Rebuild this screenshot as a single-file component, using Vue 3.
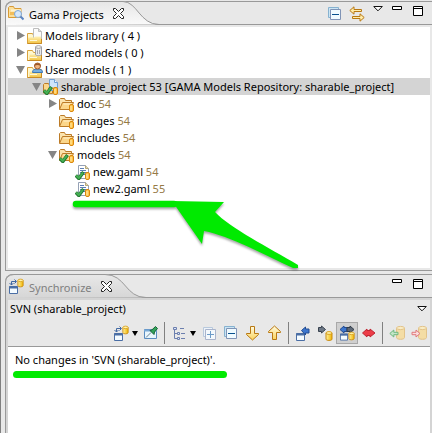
<script setup>
import { ref, computed } from 'vue'

const nodes = ref([
  { id: 1, level: 0, icon: 'library', label: 'Models library ( 4 )', open: false, branch: true },
  { id: 2, level: 0, icon: 'shared', label: 'Shared models ( 0 )', open: false, branch: true },
  { id: 3, level: 0, icon: 'user', label: 'User models ( 1 )', open: true, branch: true },
  { id: 4, level: 1, icon: 'project', label: 'sharable_project 53 [GAMA Models Repository: sharable_project]', open: true, branch: true },
  { id: 5, level: 2, icon: 'folder', label: 'doc', rev: 54, open: false, branch: true },
  { id: 6, level: 2, icon: 'folder', label: 'images', rev: 54 },
  { id: 7, level: 2, icon: 'folder', label: 'includes', rev: 54 },
  { id: 8, level: 2, icon: 'folder-ok', label: 'models', rev: 54, open: true, branch: true },
  { id: 9, level: 3, icon: 'file', label: 'new.gaml', rev: 54 },
  { id: 10, level: 3, icon: 'file', label: 'new2.gaml', rev: 55 },
])
const selected = ref(4)

const visible = computed(() => {
  let hiddenBelow = Infinity
  return nodes.value.filter((n) => {
    if (n.level > hiddenBelow) return false
    hiddenBelow = n.branch && !n.open ? n.level : Infinity
    return true
  })
})

const toolGroups = [
  [
    { icon: 'sync', label: 'Synchronize', menu: true },
    { icon: 'pin', label: 'Pin view' },
  ],
  [
    { icon: 'layout', label: 'Layout', menu: true },
    { icon: 'expand', label: 'Expand all' },
    { icon: 'collapse', label: 'Collapse all' },
    { icon: 'down', label: 'Next difference' },
    { icon: 'up', label: 'Previous difference' },
  ],
  [
    { icon: 'incoming', label: 'Incoming mode' },
    { icon: 'outgoing', label: 'Outgoing mode' },
    { icon: 'both', label: 'Incoming and outgoing mode', active: true },
    { icon: 'conflict', label: 'Conflicts mode' },
  ],
  [
    { icon: 'update', label: 'Update all', disabled: true },
    { icon: 'commit', label: 'Commit all', disabled: true },
  ],
]
</script>

<template>
  <svg class="sprite" aria-hidden="true">
    <defs>
      <linearGradient id="g-active" x1="0" y1="0" x2="0" y2="1">
        <stop offset="0" stop-color="#e6e6e6" /><stop offset="1" stop-color="#fafafa" />
      </linearGradient>
      <linearGradient id="g-idle" x1="0" y1="0" x2="0" y2="1">
        <stop offset="0" stop-color="#e8e8e8" /><stop offset="1" stop-color="#d6d6d6" />
      </linearGradient>
      <linearGradient id="g-fold" x1="0" y1="0" x2="0" y2="1">
        <stop offset="0" stop-color="#fff2b8" /><stop offset="1" stop-color="#f3c64a" />
      </linearGradient>
      <linearGradient id="g-cyl" x1="0" y1="0" x2="1" y2="0">
        <stop offset="0" stop-color="#fff3a0" /><stop offset="1" stop-color="#f0b400" />
      </linearGradient>
      <linearGradient id="g-arrow" x1="0" y1="0" x2="0" y2="1">
        <stop offset="0" stop-color="#fffbe0" /><stop offset="1" stop-color="#fbd35c" />
      </linearGradient>
    </defs>

    <symbol id="yfolder" viewBox="0 0 16 16">
      <path d="M.5 5.500h5l1 2h8v8H.5z" fill="#fff8d0" stroke="#d9a23c" />
      <path d="M2.500 9.500h4l1-1h7v6.500h-12z" fill="url(#g-fold)" />
      <path d="M.5 15.500h14V8" fill="none" stroke="#c98a24" />
      <path d="M3 12.500h7" stroke="#fff8d8" />
    </symbol>
    <symbol id="library" viewBox="0 0 16 16">
      <use href="#yfolder" />
      <path d="M6.500.5h5l3 3v7h-8z" fill="#fbfbfb" stroke="#bdbdbd" />
      <path d="M11.500.5v3h3" fill="#ddd" stroke="#bdbdbd" />
      <path d="M1 9.500h6l1-1h6V15H1z" fill="url(#g-fold)" />
      <path d="M3 12.500h7" stroke="#fff8d8" />
    </symbol>
    <symbol id="shared" viewBox="0 0 16 16">
      <use href="#yfolder" />
      <path d="M8.500 2v7.500c0 1.500 6 1.500 6 0V2" fill="#e8e8ea" stroke="#9c9ca2" />
      <ellipse cx="11.500" cy="2" rx="3" ry="1.300" fill="#fafafa" stroke="#9c9ca2" />
      <path d="M10.500 5v4M12.500 5v4" stroke="#aaaab0" />
    </symbol>
    <symbol id="user" viewBox="0 0 16 16">
      <use href="#yfolder" />
      <path d="M5.500 10.500c0-3 2-3.500 5-3.500s5 .5 5 3.500z" fill="#75aee0" stroke="#3e78b5" />
      <circle cx="10.500" cy="4" r="3" fill="#efb481" stroke="#a25b2b" />
      <path d="M7.300 4C7 .3 14 .3 13.700 4 12 2.500 9 2.500 7.300 4z" fill="#9b5627" />
    </symbol>
    <symbol id="check" viewBox="0 0 16 16">
      <path d="M.8 11.500l3 3L8.500 8" fill="none" stroke="#22752f" stroke-width="3.400" />
      <path d="M1.200 11.500l2.600 2.500L8 8.500" fill="none" stroke="#45b054" stroke-width="2" />
    </symbol>
    <symbol id="badge" viewBox="0 0 16 16">
      <rect x="10.500" y="8.500" width="4" height="7" rx="1.500" fill="#ffc24a" stroke="#d9870b" />
      <path d="M12 10v4.500" stroke="#fff0b0" />
    </symbol>
    <symbol id="ofolder" viewBox="0 0 16 16">
      <path d="M.5 13V3.500l1-1h4l1 2h6V7" fill="#fbe3ad" stroke="#bc7b27" />
      <path d="M3.500 6.500h11l-3 7h-11z" fill="#fbd68a" stroke="#bc7b27" />
      <path d="M4.500 8h8" stroke="#fff1cf" />
    </symbol>
    <symbol id="folder" viewBox="0 0 16 16"><use href="#ofolder" /><use href="#badge" /></symbol>
    <symbol id="folder-ok" viewBox="0 0 16 16"><use href="#ofolder" /><use href="#check" /><use href="#badge" /></symbol>
    <symbol id="project" viewBox="0 0 16 16">
      <path d="M.5 14V5.500l1-1h4l1 2h3v8z" fill="#fbd68a" stroke="#bc7b27" />
      <path d="M6.500.5h5l3 3v8h-8z" fill="#cfe4fa" stroke="#6f9fd4" />
      <path d="M11.500.5v3h3" fill="#f4faff" stroke="#6f9fd4" />
      <path d="M5 9.500h9" stroke="#e4a848" stroke-width="2" />
      <use href="#check" /><use href="#badge" />
    </symbol>
    <symbol id="file" viewBox="0 0 16 16">
      <path d="M3.500 1.500h7l3 3v10h-10z" fill="#fff" stroke="#95a1b5" />
      <path d="M10.500 1.500v3h3" fill="#ead9a8" stroke="#b5a878" />
      <path d="M5 4.500h4M5 6.500h6M5 8.500h7M8 10.500h3" stroke="#5c7fb5" />
      <use href="#check" /><use href="#badge" />
    </symbol>
    <symbol id="projects" viewBox="0 0 16 16">
      <path d="M.5 12.500v-10l1-1h4l1 2h6.500v9z" fill="#fbdf9a" stroke="#d79a35" />
      <path d="M3 5.500h10" stroke="#fff3d0" stroke-width="2" />
      <path d="M2 8.500h7" stroke="#f2bd5a" stroke-width="3" />
      <circle cx="10" cy="9" r="3.500" fill="#d5e8fb" stroke="#7ba6d8" />
      <path d="M12.500 11.500l3 3" stroke="#5c86c4" stroke-width="2" />
    </symbol>
    <symbol id="cyl" viewBox="0 0 8 10">
      <path d="M1 2v6.200c0 1.600 6 1.600 6 0V2" fill="url(#g-cyl)" stroke="#c98a10" />
      <ellipse cx="4" cy="2" rx="3" ry="1.400" fill="#fff4a8" stroke="#d9a020" />
    </symbol>
    <symbol id="win" viewBox="0 0 9 8">
      <path d="M.5.5h8v7h-8z" fill="#f4fbff" stroke="#4a6ea5" />
      <path d="M0 1.500h9" stroke="#4a6ea5" stroke-width="2" />
    </symbol>
    <symbol id="sync" viewBox="0 0 16 16">
      <use href="#win" x="1" y="8" width="9" height="8" />
      <use href="#cyl" x="9" y="0" width="7" height="10" />
      <path d="M3.500 7V3.500H8M6.500 1.500l2 2-2 2M1.500 5l2 2 2-2" fill="none" stroke="#4169a3" />
    </symbol>
    <symbol id="pin" viewBox="0 0 16 16">
      <path d="M1.500 4.500h12v9h-12z" fill="#e9f6fd" stroke="#5a8cc0" />
      <path d="M1 5.500h13" stroke="#78a9d6" stroke-width="2" />
      <path d="M3 12.500l5-5" stroke="#6b8294" />
      <path d="M7 5.500l4 4 .5-2.500 3-3.500-2-2L9 4.800z" fill="#34a35a" stroke="#176436" />
    </symbol>
    <symbol id="layout" viewBox="0 0 16 16">
      <path d="M3.500 4v9.500H7M3.500 8.500H7M9 3.500h4M10 8.500h4M10 13.500h4" fill="none" stroke="#6c7fae" />
      <path d="M2.500 2.500h3v2h-3zM6.500 7.500h2v2h-2zM6.500 12.500h2v2h-2z" fill="#dce6fa" stroke="#6c7fae" />
    </symbol>
    <symbol id="expand" viewBox="0 0 16 16">
      <path d="M2.500 2.500h9v9h-9z" fill="#eef3f9" stroke="#b8c9dd" />
      <path d="M4.500 4.500h10v10h-10z" fill="#f3f8fc" stroke="#a9b4cc" />
      <path d="M6 9.500h7M9.500 6v7" stroke="#6c9bc8" />
    </symbol>
    <symbol id="collapse" viewBox="0 0 16 16">
      <path d="M1.500 1.500h10v10h-10z" fill="#cbe5f4" stroke="#87b2d0" />
      <path d="M3.500 3.500h10v10h-10z" fill="#f0fbff" stroke="#8094b6" />
      <path d="M5 8.500h7" stroke="#08518e" />
    </symbol>
    <symbol id="down" viewBox="0 0 16 16">
      <path d="M5.500 1.500h4v7h4v1L7.500 15l-6-5.500v-1h4z" fill="url(#g-arrow)" stroke="#b87813" />
    </symbol>
    <symbol id="up" viewBox="0 0 16 16">
      <path d="M5.500 14.500h4v-7h4v-1L7.500 1l-6 5.500v1h4z" fill="url(#g-arrow)" stroke="#b87813" />
    </symbol>
    <symbol id="incoming" viewBox="0 0 16 16">
      <use href="#win" x="1" y="8" width="9" height="8" />
      <path d="M6.500 5.500l4-3.500v2h3.500v4h-3.500v2z" fill="#3c76cf" stroke="#234c91" />
    </symbol>
    <symbol id="outgoing" viewBox="0 0 16 16">
      <path d="M1.500 2.500h3V1l4 3.500-4 3.500V6.500h-3z" fill="#6d7886" stroke="#38424f" />
      <use href="#cyl" x="8" y="6" width="8" height="10" />
    </symbol>
    <symbol id="both" viewBox="0 0 16 16">
      <path d="M8 2.500H5V1L1 4.500 5 8V6.500h3z" fill="#3c76cf" stroke="#234c91" />
      <path d="M8 2.500h3V1l4 3.500L11 8V6.500H8z" fill="#5d6876" stroke="#303b48" />
      <use href="#win" x="1" y="8" width="8" height="8" />
      <use href="#cyl" x="9" y="6" width="7" height="10" />
    </symbol>
    <symbol id="conflict" viewBox="0 0 16 16">
      <path d="M1.500 8L6 4v1.500h3V4l5 4-5 4v-1.500H6V12z" fill="#ec3d48" stroke="#bf2633" />
    </symbol>
    <symbol id="update" viewBox="0 0 16 16">
      <path d="M7.500 3v9.500c0 2.400 8 2.400 8 0V3" fill="#f4dda5" stroke="#e2c38a" />
      <ellipse cx="11.500" cy="3" rx="4" ry="1.600" fill="#faedc5" stroke="#e2c38a" />
      <path d="M.8 8.500l4-3.500v2.300H9v2.400H4.800V12z" fill="#c4e6c8" stroke="#6fb77c" />
    </symbol>
    <symbol id="commit" viewBox="0 0 16 16">
      <path d="M7.500 3v9.500c0 2.400 8 2.400 8 0V3" fill="#f4dda5" stroke="#e2c38a" />
      <ellipse cx="11.500" cy="3" rx="4" ry="1.600" fill="#faedc5" stroke="#e2c38a" />
      <path d="M9 8.500L5 5v2.300H1v2.400h4V12z" fill="#fbdcdc" stroke="#e0787c" />
    </symbol>
    <symbol id="link" viewBox="0 0 16 16">
      <path d="M.8 4.500L5 .8v2.700h7.500v2H5v2.700z" fill="#ffedab" stroke="#b87813" />
      <path d="M15.200 11.500L11 7.800v2.700H3.500v2H11v2.700z" fill="#ffedab" stroke="#b87813" />
    </symbol>
    <symbol id="close" viewBox="0 0 11 11">
      <path d="M.5.5h2l3 3 3-3h2v2l-3 3 3 3v2h-2l-3-3-3 3h-2v-2l3-3-3-3z" fill="#fff" stroke="#222" />
    </symbol>
    <symbol id="menu" viewBox="0 0 10 6">
      <path d="M.7.500h8.600L5 4.800z" fill="#fff" stroke="#111" />
    </symbol>
    <symbol id="min" viewBox="0 0 10 4">
      <path d="M.5.5h9v3h-9z" fill="#fff" stroke="#000" />
    </symbol>
    <symbol id="max" viewBox="0 0 10 10">
      <path d="M.5.5h9v9h-9zM.5 2.500h9" fill="#fff" stroke="#000" />
    </symbol>
  </svg>

  <div class="window">
    <main class="views">
      <section class="view">
        <header class="tabs">
          <svg class="tab-shape" viewBox="0 0 160 24" aria-hidden="true">
            <path d="M0 24V8Q1 1 9 .5H118C132 .5 135 23.500 154 23.500z" fill="url(#g-active)" />
            <path d="M.5 24V8Q1 1 9 .5H118C132 .5 135 23.500 154 23.500" fill="none" stroke="#999" />
          </svg>
          <div class="tab">
            <svg class="icon"><use href="#projects" /></svg>
            <h2>Gama Projects</h2>
            <button class="close" aria-label="Close Gama Projects"><svg><use href="#close" /></svg></button>
          </div>
          <div class="actions">
            <button aria-label="Collapse all"><svg class="icon"><use href="#collapse" /></svg></button>
            <button aria-label="Link with editor"><svg class="icon"><use href="#link" /></svg></button>
            <button class="glyph" aria-label="View menu"><svg class="g-menu"><use href="#menu" /></svg></button>
            <button class="glyph" aria-label="Minimize"><svg class="g-min"><use href="#min" /></svg></button>
            <button class="glyph last" aria-label="Maximize"><svg class="g-max"><use href="#max" /></svg></button>
          </div>
        </header>
        <div class="body projects">
          <ul class="tree">
            <li
              v-for="n in visible"
              :key="n.id"
              :class="['row', 'level-' + n.level, { selected: n.id === selected }]"
              @click="selected = n.id"
            >
              <button
                v-if="n.branch"
                class="toggle"
                :aria-label="'Toggle ' + n.label"
                :aria-expanded="n.open"
                @click.stop="n.open = !n.open"
              >
                <svg viewBox="0 0 9 9">
                  <path :d="n.open ? 'M0 1h9L4.500 9z' : 'M1 0v9l8-4.500z'" fill="#858585" />
                </svg>
              </button>
              <span v-else class="toggle"></span>
              <svg class="icon"><use :href="'#' + n.icon" /></svg>
              <span class="label">{{ n.label }} <span v-if="n.rev" class="rev">{{ n.rev }}</span></span>
            </li>
          </ul>
        </div>
      </section>

      <section class="view idle">
        <header class="tabs">
          <svg class="tab-shape" viewBox="0 0 160 24" aria-hidden="true">
            <path d="M0 24V8Q1 1 9 .5H100C121 .5 120 23.500 141 23.500z" fill="url(#g-idle)" />
            <path d="M.5 24V8Q1 1 9 .5H100C121 .5 120 23.500 141 23.500" fill="none" stroke="#999" />
          </svg>
          <div class="tab">
            <svg class="icon"><use href="#sync" /></svg>
            <h2>Synchronize</h2>
            <button class="close" aria-label="Close Synchronize"><svg><use href="#close" /></svg></button>
          </div>
          <div class="actions">
            <button class="glyph" aria-label="Minimize"><svg class="g-min"><use href="#min" /></svg></button>
            <button class="glyph last" aria-label="Maximize"><svg class="g-max"><use href="#max" /></svg></button>
          </div>
        </header>
        <div class="body">
          <div class="caption">
            <span>SVN (sharable_project)</span>
            <button aria-label="View menu"><svg class="g-menu"><use href="#menu" /></svg></button>
          </div>
          <div class="toolbar" role="toolbar" aria-label="Synchronize">
            <div v-for="(group, i) in toolGroups" :key="i" class="group">
              <button
                v-for="t in group"
                :key="t.icon"
                :class="['tool', { active: t.active, wide: t.menu }]"
                :aria-label="t.label"
                :disabled="t.disabled"
              >
                <svg class="icon"><use :href="'#' + t.icon" /></svg>
                <svg v-if="t.menu" class="drop" viewBox="0 0 6 5"><path d="M0 0h6L3 5z" /></svg>
              </button>
            </div>
          </div>
          <div class="result">
            <p>No changes in 'SVN (sharable_project)'.</p>
            <div class="underline"></div>
          </div>
        </div>
      </section>
    </main>

    <svg class="annotation" viewBox="0 0 240 80" aria-hidden="true">
      <path d="M6 9H104" stroke="#00e800" stroke-width="6.500" stroke-linecap="round" />
      <path
        d="M102 6L154 7 145 17C160 33 198 52 228 70V73L223 73C195 60 160 41 134 36L132 49z"
        fill="#00ea00"
      />
    </svg>
  </div>
</template>

<style>
body {
  margin: 0;
  background: #e8e8e8;
}
</style>

<style scoped>
.sprite {
  position: absolute;
  width: 0;
  height: 0;
}
.window {
  position: relative;
  box-sizing: border-box;
  min-height: 100vh;
  display: flex;
  padding: 1px 0 0 4px;
  border-left: 1px solid #808080;
  background: #e8e8e8;
  color: #000;
  font: 11px/17px "Noto Sans", "Lucida Grande", sans-serif;
  overflow: hidden;
}
.views {
  flex: 1;
  min-width: 0;
  display: grid;
  grid-template-rows: 270fr 159fr;
  gap: 3px;
}
.view {
  display: flex;
  flex-direction: column;
  min-width: 0;
  border-left: 1px solid #999;
  border-bottom: 1px solid #999;
  border-top-left-radius: 8px;
}
.view.idle {
  border-bottom: 0;
}
.tabs {
  position: relative;
  display: flex;
  justify-content: space-between;
  box-sizing: border-box;
  height: 24px;
  margin-left: -1px;
  border-top: 1px solid #999;
  border-bottom: 1px solid #999;
  border-top-left-radius: 8px;
}
.tab-shape {
  position: absolute;
  left: 0;
  top: -1px;
  width: 160px;
  height: 24px;
}
.tab {
  position: relative;
  display: flex;
  align-items: center;
  padding-left: 3px;
}
h2 {
  margin: 0 0 0 5px;
  padding-top: 2px;
  font: inherit;
}
.idle h2 {
  color: #808080;
}
button {
  display: flex;
  align-items: center;
  justify-content: center;
  margin: 0;
  padding: 0;
  border: 0;
  background: none;
  font: inherit;
}
.icon {
  flex: none;
  width: 16px;
  height: 16px;
}
.close {
  margin-left: 9px;
}
.close svg {
  width: 11px;
  height: 11px;
}
.actions {
  display: flex;
  align-items: flex-start;
  padding: 4px 9px 0 0;
}
.actions button {
  width: 22px;
}
.actions .glyph {
  width: 19px;
}
.actions .last {
  width: 10px;
  margin-left: 7px;
}
.g-menu {
  width: 10px;
  height: 6px;
}
.g-min {
  width: 10px;
  height: 4px;
}
.g-max {
  width: 10px;
  height: 10px;
}
.body {
  flex: 1;
  display: flex;
  flex-direction: column;
  min-width: 0;
  padding: 2px 2px 0;
}
.projects {
  padding-bottom: 2px;
}
.idle .body {
  border: 2px solid #d4d4d4;
  border-bottom: 0;
  padding: 0;
}
.tree {
  flex: 1;
  margin: 0;
  padding: 0;
  list-style: none;
  background: #fff;
}
.row {
  display: flex;
  align-items: center;
  height: 17px;
  padding-left: 8px;
}
.level-1 {
  padding-left: 24px;
}
.level-2 {
  padding-left: 40px;
}
.level-3 {
  padding-left: 56px;
}
.selected {
  background: #d4d4d4;
}
.toggle {
  flex: none;
  width: 9px;
  margin-right: 2px;
}
.toggle svg {
  width: 9px;
  height: 9px;
}
.label {
  margin-left: 2px;
  white-space: nowrap;
}
.rev {
  color: #967a46;
}
.caption {
  display: flex;
  justify-content: space-between;
  padding: 0 2px 0 2px;
}
.caption button {
  width: 12px;
}
.toolbar {
  display: flex;
  justify-content: flex-end;
  padding: 5px 0 2px;
  border-bottom: 1px solid #999;
}
.group {
  display: flex;
}
.group + .group::before {
  content: "";
  width: 1px;
  margin: 0 3px 0 2px;
  background: #808080;
}
.tool {
  box-sizing: border-box;
  width: 22px;
  height: 22px;
}
.tool.wide {
  width: 30px;
  justify-content: flex-start;
  padding-left: 3px;
}
.tool.active {
  border: 1px solid #a8a8a8;
  background: #cfcfcf;
}
.drop {
  width: 6px;
  height: 5px;
  margin-left: 3px;
}
.result {
  flex: 1;
  padding: 4px 7px 0;
  background: #fff;
}
.result p {
  margin: 0;
}
.underline {
  width: 214px;
  max-width: 100%;
  height: 7px;
  margin: 3px 0 0 -2px;
  border-radius: 4px;
  background: #00ea00;
}
.annotation {
  position: absolute;
  left: 69px;
  top: 195px;
  width: 240px;
  height: 80px;
  fill: none;
  pointer-events: none;
  filter: drop-shadow(0 2px 1px rgba(0, 0, 0, 0.35));
}
</style>
